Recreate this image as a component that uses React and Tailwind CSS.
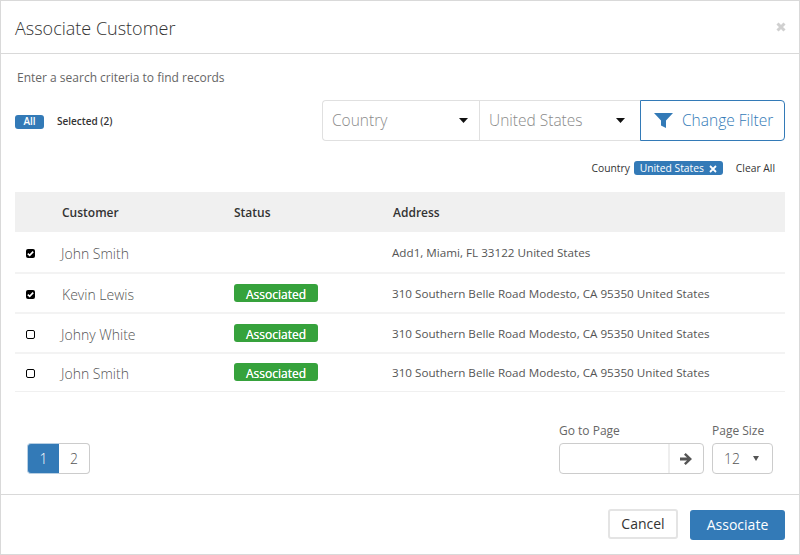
import React from "react";

const Check = ({ on }) =>
  on ? (
    <span className="flex h-[9px] w-[9px] items-center justify-center rounded-[2px] bg-black">
      <svg viewBox="0 0 9 9" className="h-[9px] w-[9px]"><path d="M1.800 4.600 3.700 6.400 7.200 2.600" fill="none" stroke="#fff" strokeWidth="1.600" /></svg>
    </span>
  ) : (
    <span className="h-[9px] w-[9px] rounded-[2px] border border-black bg-white" />
  );

const Caret = () => (
  <svg viewBox="0 0 9 5" className="h-[5px] w-[9px]"><path d="M0 0h9L4.500 5z" fill="#111" /></svg>
);

const Badge = () => (
  <span className="mb-[2px] flex h-[18px] w-[84px] items-center justify-center rounded-[3px] bg-[#36a23c] pt-[3px] text-[12px] text-white [text-shadow:0_0_0.4px_#fff]">Associated</span>
);

const ADDR = "310 Southern Belle Road Modesto, CA 95350 United States";
const rows = [
  { on: true, name: "John Smith", assoc: false, addr: "Add1, Miami, FL 33122 United States", box: "h-[42px] pt-[2px] border-b-2 border-[#f3f3f3]", nx: "-ml-[1px]" },
  { on: true, name: "Kevin Lewis", assoc: true, addr: ADDR, box: "h-[40px] pt-[2px] border-b-2 border-[#f3f3f3]", nx: "" },
  { on: false, name: "Johny White", assoc: true, addr: ADDR, box: "h-[40px] pt-[2px] border-b-2 border-[#f3f3f3]", nx: "-ml-[1px]" },
  { on: false, name: "John Smith", assoc: true, addr: ADDR, box: "h-[38px] pt-[1px] border-b border-[#f0f0f0]", nx: "-ml-[1px]" },
];

export default function App() {
  return (
    <div className="flex h-[555px] w-[800px] flex-col border border-[#d9d9d9] bg-white font-['Open_Sans',sans-serif] text-[#555]">
      <header className="flex h-[53px] shrink-0 items-center justify-between border-b border-[#d9d9d9] pl-[14px] pr-[13px]">
        <h1 className="pt-[2px] text-[18px] font-light text-[#333]">Associate Customer</h1>
        <svg viewBox="0 0 10 10" className="mb-[1px] h-[10px] w-[10px]"><path d="M1.500 1.500l7 7M8.500 1.500l-7 7" stroke="#d0d0d0" strokeWidth="3" /></svg>
      </header>

      <main className="flex min-h-0 flex-1 flex-col px-[14px]">
        <p className="mt-[16px] pl-[2px] text-[12px] leading-[16px] text-[#666]">Enter a search criteria to find records</p>

        <div className="mt-[14px] flex h-[41px] items-center justify-between">
          <div className="flex items-center pt-[2px]">
            <span className="flex h-[14px] w-[29px] items-center justify-center rounded-[3px] bg-[#337ab7] text-[10px] font-semibold text-white">All</span>
            <span className="ml-[13px] text-[10px] font-semibold text-[#333]">Selected (2)</span>
          </div>
          <div className="flex h-[41px]">
            <div className="flex w-[157px] items-center justify-between rounded-l-[4px] border border-r-0 border-[#e0e0e0] pl-[9px] pr-[11px] text-[15.500px] font-light text-[#8a8a8a]">
              Country <Caret />
            </div>
            <div className="flex w-[161px] items-center justify-between border border-r-0 border-[#e0e0e0] pl-[9px] pr-[15px] text-[15.500px] font-light text-[#8a8a8a]">
              United States <Caret />
            </div>
            <button className="flex w-[145px] items-center gap-[9px] rounded-r-[4px] border border-[#337ab7] pl-[13px] text-[15.500px] font-light text-[#337ab7]">
              <svg viewBox="0 0 19 15" className="h-[15px] w-[19px]"><path d="M0 0h19l-7 7.500V15l-5-2.500V7.500z" fill="#337ab7" /></svg>
              Change Filter
            </button>
          </div>
        </div>

        <div className="mt-[20px] flex h-[14px] items-center justify-end pr-[10px] text-[10.300px] text-[#333]">
          <span className="pt-[2px]">Country</span>
          <span className="ml-[4px] flex h-[14px] w-[89px] items-center justify-center gap-[5px] rounded-[3px] bg-[#337ab7] pt-[1px] text-white">
            United States
            <svg viewBox="0 0 8 8" className="h-[8px] w-[8px]"><path d="M1 1l6 6M7 1l-6 6" stroke="#fff" strokeWidth="1.800" /></svg>
          </span>
          <span className="ml-[13px] pt-[2px]">Clear All</span>
        </div>

        <div className="mt-[17px]">
          <div className="grid h-[40px] grid-cols-[47px_172px_159px_1fr] items-center bg-[#f0f0f0] pt-[2px] text-[12px] font-semibold text-[#333]">
            <span className="col-start-2">Customer</span>
            <span>Status</span>
            <span>Address</span>
          </div>
          {rows.map((r, i) => (
            <div key={i} className={`grid grid-cols-[47px_172px_158px_1fr] items-center ${r.box}`}>
              <span className="flex pl-[11px]"><Check on={r.on} /></span>
              <span className={`text-[14px] font-light text-[#555] ${r.nx}`}>{r.name}</span>
              <span>{r.assoc && <Badge />}</span>
              <span className="text-[11.660px] text-[#555]">{r.addr}</span>
            </div>
          ))}
        </div>

        <div className="mt-[31px] flex items-end justify-between pb-[20px] pl-[13px] pr-[12px]">
          <div className="-ml-[1px] flex h-[31px] text-[14px] font-light">
            <span className="flex w-[32px] items-center justify-center rounded-l-[4px] border border-r-0 border-[#b8cfe3] bg-[#337ab7] text-white">1</span>
            <span className="flex w-[31px] items-center justify-center rounded-r-[4px] border border-l-0 border-[#ccc] text-[#555]">2</span>
          </div>
          <div className="flex gap-[8px]">
            <div>
              <div className="mb-[4px] text-[12px] leading-[16px] text-[#666]">Go to Page</div>
              <div className="flex h-[31px] w-[145px] rounded-[4px] border border-[#ccc]">
                <span className="flex-1" />
                <span className="flex w-[35px] items-center justify-center border-l-2 border-[#eee]">
                  <svg viewBox="0 0 13 12" className="h-[12px] w-[13px]"><path d="M0 4.500h7L4 1.700 5.700 0 12 6 5.700 12 4 10.300 7 7.500H0z" fill="#555" /></svg>
                </span>
              </div>
            </div>
            <div>
              <div className="mb-[4px] text-[12px] leading-[16px] text-[#666]">Page Size</div>
              <div className="flex h-[31px] w-[61px] items-center justify-between rounded-[4px] border border-[#ccc] pl-[11px] pr-[13px] text-[14px] font-light text-[#555]">
                12
                <svg viewBox="0 0 6 5" className="h-[5px] w-[6px]"><path d="M0 0h6L3 5z" fill="#555" /></svg>
              </div>
            </div>
          </div>
        </div>
      </main>

      <footer className="flex h-[60px] shrink-0 items-center justify-end gap-[12px] border-t border-[#d9d9d9] pr-[14px]">
        <button className="mb-[2px] flex h-[30px] w-[70px] items-center justify-center rounded-[3px] border-2 border-[#e4e4e4] text-[14px] text-[#333]">Cancel</button>
        <button className="flex h-[30px] w-[95px] items-center justify-center rounded-[3px] bg-[#337ab7] text-[14px] text-white">Associate</button>
      </footer>
    </div>
  );
}
